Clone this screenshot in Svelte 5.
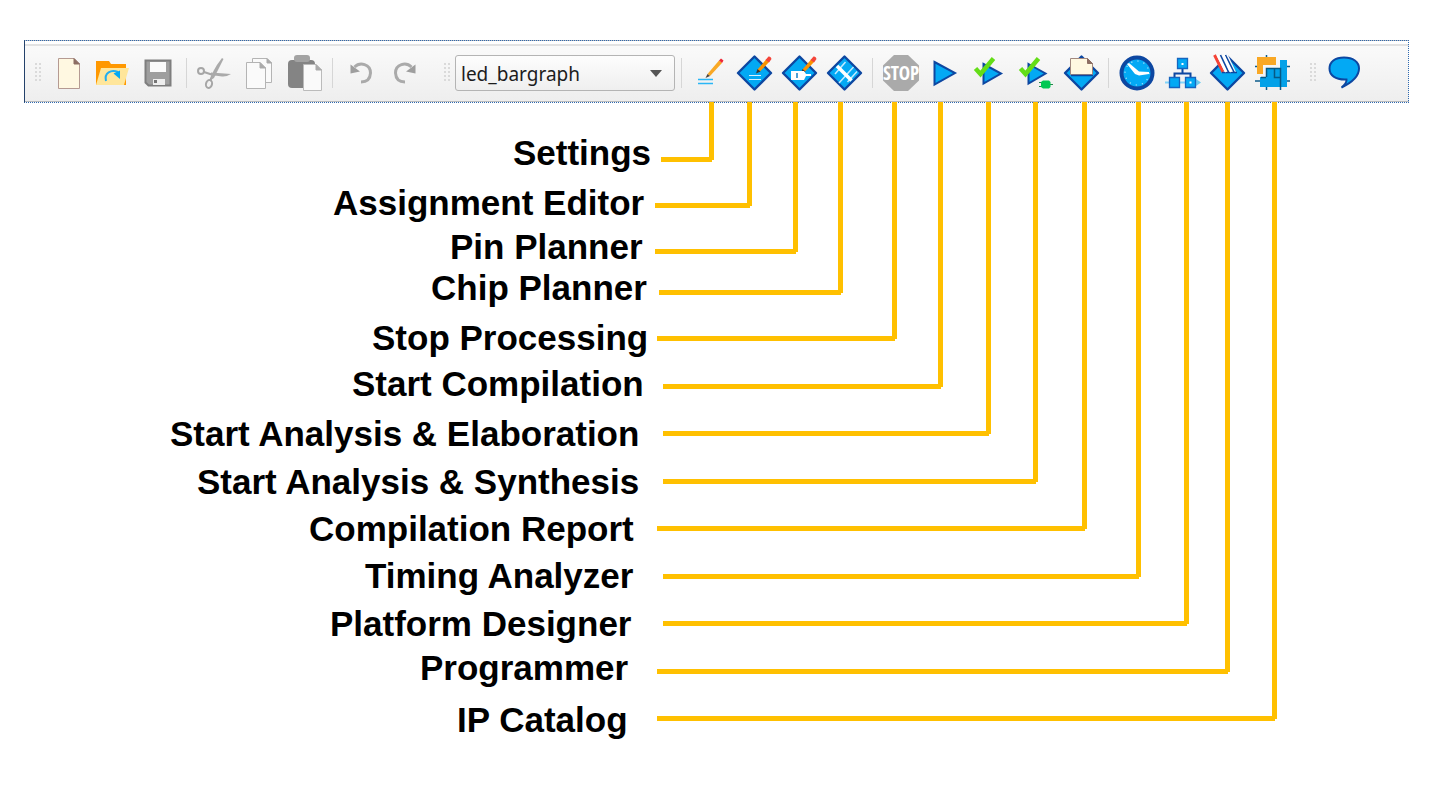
<script>
  const callouts = [
    { label: 'Settings', x: 513, y: 133, from: 661, line: 157, to: 709 },
    { label: 'Assignment Editor', x: 333, y: 183, from: 655, line: 203, to: 747 },
    { label: 'Pin Planner', x: 450, y: 227, from: 655, line: 249, to: 793 },
    { label: 'Chip Planner', x: 431, y: 268, from: 659, line: 290, to: 838 },
    { label: 'Stop Processing', x: 372, y: 318, from: 657, line: 336, to: 892 },
    { label: 'Start Compilation', x: 352, y: 364, from: 663, line: 384, to: 938 },
    { label: 'Start Analysis & Elaboration', x: 170, y: 414, from: 663, line: 431, to: 986 },
    { label: 'Start Analysis & Synthesis', x: 197, y: 462, from: 663, line: 479, to: 1033 },
    { label: 'Compilation Report', x: 309, y: 509, from: 657, line: 526, to: 1082 },
    { label: 'Timing Analyzer', x: 365, y: 556, from: 663, line: 574, to: 1136 },
    { label: 'Platform Designer', x: 330, y: 604, from: 663, line: 621, to: 1184 },
    { label: 'Programmer', x: 420, y: 648, from: 657, line: 669, to: 1225 },
    { label: 'IP Catalog', x: 457, y: 700, from: 657, line: 716, to: 1272 },
  ];
  const top = 102;
  const groups = [
    ['New', 'Open', 'Save'],
    ['Cut', 'Copy', 'Paste'],
    ['Undo', 'Redo'],
  ];
  const tools = [
    ['Settings', 'Assignment Editor', 'Pin Planner', 'Chip Planner'],
    ['Stop Processing', 'Start Compilation', 'Start Analysis & Elaboration', 'Start Analysis & Synthesis', 'Compilation Report'],
    ['Timing Analyzer', 'Platform Designer', 'Programmer', 'IP Catalog'],
  ];
</script>

{#snippet grip()}
  <span class="grip">
    <svg width="6" height="20" viewBox="0 0 6 20" aria-hidden="true">
      {#each [0, 4, 8, 12, 16] as y}
        <path d="M0 {y}h2v2h-2zM4 {y}h2v2h-2z" fill="#dadada" />
      {/each}
    </svg>
  </span>
{/snippet}

{#snippet diamond()}
  <path d="M22.500 9.500L39 26L22.500 42.500L6 26Z" fill="#03a9f4" stroke="#0d47a1" stroke-width="2.400" stroke-linejoin="round" />
{/snippet}

{#snippet pencil()}
  <path d="M25.500 22.500L34.500 12L37.500 14.500L28 24.500Z" fill="#fb9200" />
  <path d="M33.500 13L36.500 9.500Q39 9 39.500 12L37 15.500Z" fill="#f4453a" />
  <path d="M25.500 22L28.500 24.500L24 26.500Z" fill="#3e3430" />
{/snippet}

{#snippet check()}
  <path d="M7.500 21.500L12.500 27L25.500 11.500" fill="none" stroke="#64dd17" stroke-width="4.500" />
{/snippet}

{#snippet icon(name)}
  <svg class="icon" viewBox="0 0 45 52" aria-hidden="true">
    {#if name === 'New'}
      <path d="M12.500 11.500H28L33.500 17V41.500H12.500Z" fill="#fff8e1" stroke="#b59a92" />
      <path d="M28 11.500L33.500 17H28Z" fill="#8d6e63" stroke="#8d6e63" />
    {:else if name === 'Open'}
      <path d="M5 14H18L20 17H35V38H5Z" fill="#ff9800" />
      <path d="M10 21H38L33 38H5Z" fill="#ffe69b" />
      <path d="M15 34C13 26 20 22 27 25" fill="none" stroke="#22aef0" stroke-width="2" />
      <path d="M22.500 26.500L29 23.500V32Z" fill="#03a9f4" />
    {:else if name === 'Save'}
      <path d="M9.500 13.500H34.500V38.500H12.500L9.500 35.500Z" fill="#9e9e9e" stroke="#7e7e7e" stroke-width="2" />
      <path d="M14 15H30V25H14Z" fill="#fafafa" />
      <path d="M17 32H29V38H17Z" fill="#eee" />
      <path d="M18 33H21V36H18Z" fill="#757575" />
    {:else if name === 'Cut'}
      <g fill="none" stroke="#a6a6a6" stroke-width="2">
        <circle cx="9" cy="24" r="3" />
        <ellipse cx="17" cy="37" rx="3" ry="4" transform="rotate(15 17 37)" />
        <path d="M12 25L21 28M18 34L21 27" />
      </g>
      <path d="M19 25.500L39 27Q34 30 30 29.500L19 28ZM30 11L31.500 12L22 31L19 33Q19 25 30 11Z" fill="#aaa" />
    {:else if name === 'Copy'}
      <g transform="translate(-1 0)">
        <path d="M16.500 11.500H31L35.500 16V35.500H16.500Z" fill="#fafafa" stroke="#b4b4b4" />
        <path d="M31 11.500V16H35.500Z" fill="#aaa" stroke="#aaa" />
        <path d="M10.500 15.500H24L29.500 21V41.500H10.500Z" fill="#fafafa" stroke="#b4b4b4" />
        <path d="M24 15.500V21H29.500Z" fill="#aaa" stroke="#aaa" />
      </g>
    {:else if name === 'Paste'}
      <rect x="6" y="13" width="27" height="28" rx="4" fill="#848484" />
      <rect x="12" y="8" width="16" height="7" rx="3" fill="#a3a3a3" />
      <path d="M21.500 17.500H34L39.500 23V43.500H21.500Z" fill="#fafafa" stroke="#bbb" />
      <path d="M34 17.500V23H39.500Z" fill="#aaa" stroke="#aaa" />
    {:else if name === 'Undo'}
      <path d="M16.500 20C22 14.500 32.500 17 32.500 26Q32 35 23 35" fill="none" stroke="#aaa" stroke-width="3" />
      <path d="M12.500 17.500V26.500L22 24.500Z" fill="#9e9e9e" />
    {:else if name === 'Redo'}
      <path d="M28.500 20C23 14.500 12.500 17 12.500 26Q13 35 22 35" fill="none" stroke="#aaa" stroke-width="3" />
      <path d="M32.500 17.500V26.500L23 24.500Z" fill="#9e9e9e" />
    {:else if name === 'Settings'}
      <path d="M20.500 27L32 13.500L35 16L23 29Z" fill="#f9a825" />
      <path d="M32 13.500L34 11.500L36.500 13.500L35 16Z" fill="#ee2737" />
      <path d="M20.500 27L23 29L18.500 31Z" fill="#4e443c" />
      <path d="M11 32.500H26M11 36.500H26" stroke="#29b6f6" stroke-width="1.500" />
    {:else if name === 'Assignment Editor'}
      {@render diamond()}
      {@render pencil()}
      <path d="M17 28.500H29M17 32.500H29" stroke="#d9f2ff" />
    {:else if name === 'Pin Planner'}
      {@render diamond()}
      {@render pencil()}
      <path d="M14 24H27L29 27H34V29H29L27 33H14Z" fill="#fff" />
      <path d="M19 26H21V31H19Z" fill="#4d9fd4" />
    {:else if name === 'Chip Planner'}
      {@render diamond()}
      <path d="M23.500 15L13 27M31.500 20L17 36M35 24.500L25.500 35" stroke="#c3eaff" stroke-width="1.500" />
      <path d="M15 19L29.500 33.500" stroke="#fff" stroke-width="3.500" />
    {:else if name === 'Stop Processing'}
      <path d="M16 8H30L41 18.500V33.500L30 44H16L5 33.500V18.500Z" fill="#aaa" />
      <text x="23" y="33" text-anchor="middle" class="stop">STOP</text>
    {:else if name === 'Start Compilation'}
      <path d="M11.500 15L32 26L11.500 37.500Z" fill="#03a9f4" stroke="#0d47a1" stroke-width="2" />
    {:else if name === 'Start Analysis & Elaboration'}
      <path d="M15.500 17L33 26.500L15.500 36.500Z" fill="#03a9f4" stroke="#0d47a1" stroke-width="2" />
      {@render check()}
    {:else if name === 'Start Analysis & Synthesis'}
      <path d="M15.500 17L32.500 26.500L15.500 36.500Z" fill="#03a9f4" stroke="#0d47a1" stroke-width="2" />
      {@render check()}
      <path d="M26 35.500H29M26 39.500H29M36 37.500H40" stroke="#22894b" />
      <path d="M30 33.500H36L37.500 35V40L36 41.500H30L28 40V35Z" fill="#00c853" />
    {:else if name === 'Compilation Report'}
      <g transform="translate(1 0)">
        {@render diamond()}
        <path d="M11.500 11.500H28.500L33.500 16.500V27.500H11.500Z" fill="#fff8e1" stroke="#a1887f" />
        <path d="M28.500 11.500V16.500H33.500Z" fill="#8d6e63" stroke="#8d6e63" />
        <path d="M12 28.500H34" stroke="#0d47a1" stroke-width="1.500" />
      </g>
    {:else if name === 'Timing Analyzer'}
      <circle cx="23" cy="26" r="15.500" fill="#03a9f4" stroke="#0d47a1" stroke-width="4" />
      <circle cx="23" cy="26" r="12" fill="none" stroke="#b3e5fc" stroke-dasharray="1.200 5.083" stroke-width="1.200" />
      <path d="M13 17L15 16L25 24.500L35 25V27L25 28.500L21 27Z" fill="#fff" />
    {:else if name === 'Platform Designer'}
      <g transform="translate(1 0)">
        <path d="M5 35.500H37" stroke="#81d4fa" stroke-width="2" />
        <path d="M36 32L41 35.500L36 39Z" fill="#6ccbf0" />
        <path d="M22.500 21V26M14.500 32V26.500H30.500V32" fill="none" stroke="#0d47a1" stroke-width="2" />
        <g fill="#03a9f4" stroke="#1565c0" stroke-width="1.300">
          <path d="M17.500 11.500H27.500V21.500H17.500ZM9.500 30.500H19.500V40.500H9.500ZM25.500 30.500H35.500V40.500H25.500Z" />
        </g>
        <path d="M21.500 16H23.500V18H21.500ZM29.500 34.500H31.500V36.500H29.500Z" fill="#fff" />
      </g>
    {:else if name === 'Programmer'}
      <g transform="translate(1 0)">
        {@render diamond()}
        <path d="M7 8H23L31 25H18Z" fill="#fafafa" />
        <path d="M9.500 8L18 25" stroke="#f44336" stroke-width="3" />
        <path d="M15.500 8L23.500 25M20.500 8L29 25M17 25.500H32" stroke="#0d47a1" stroke-width="1.600" />
        <path d="M12.500 8L21 25M18.500 8L26 25" stroke="#fff" stroke-width="2" />
      </g>
    {:else if name === 'IP Catalog'}
      <path d="M17.500 8V12M6 19.500H10M36 19.500H41M6 34H12M36 34H41M17.500 38V43M31.500 38V43" stroke="#0d5c8c" stroke-width="1.500" />
      <path d="M8 10H27V18H14V27H8Z" fill="#f9a825" />
      <path d="M31 13H38V40H11V30H17V21H31Z" fill="#03a1e8" />
      <path d="M17.500 30V21.500H31.500V40M25.500 22V30.500H31M12 30.500H17" fill="none" stroke="#075985" stroke-width="1.500" />
    {:else if name === 'Comment'}
      <path d="M23 10.500C32 10.500 38 15 38 21.500C38 28 34 34 20.500 40.500Q26 36 25.500 32.500C14 33 8.500 28 8.500 21.500C8.500 15 14 10.500 23 10.500Z" fill="#03a9f4" stroke="#0d47a1" stroke-width="2" />
    {/if}
  </svg>
{/snippet}

{#snippet toolButton(name)}
  <button type="button" aria-label={name}>{@render icon(name)}</button>
{/snippet}

<main>
  <div class="toolbar" role="toolbar" aria-label="Main toolbar">
    {@render grip()}
    {#each groups as group, i}
      {#if i > 0}<span class="separator"></span>{/if}
      {#each group as name}{@render toolButton(name)}{/each}
    {/each}
    {@render grip()}
    <span class="picker">
      <select aria-label="Revision">
        <option>led_bargraph</option>
      </select>
      <svg width="12" height="7" viewBox="0 0 12 7" aria-hidden="true"><path d="M0 0H12L6 7Z" fill="#555" /></svg>
    </span>
    {#each tools as group}
      <span class="separator"></span>
      {#each group as name}{@render toolButton(name)}{/each}
    {/each}
    {@render grip()}
    {@render toolButton('Comment')}
  </div>

  <svg class="connectors" aria-hidden="true">
    {#each callouts as c}
      <rect x={c.to} y={top} width="5" height={c.line + 3 - top} />
      <rect x={c.from} y={c.line} width={c.to + 3 - c.from} height="5" />
    {/each}
  </svg>
  <ul>
    {#each callouts as c}
      <li style="left: {c.x}px; top: {c.y}px">{c.label}</li>
    {/each}
  </ul>
</main>

<style>
  :global(body) {
    margin: 0;
    background: #fff;
  }
  main {
    position: relative;
    box-sizing: border-box;
    min-height: 100vh;
    padding: 40px 22px 0 24px;
    font-family: "Liberation Sans", Arial, sans-serif;
  }
  .toolbar {
    display: flex;
    align-items: center;
    box-sizing: border-box;
    height: 63px;
    padding-top: 2px;
    border: 1px dotted #2f69b0;
    border-left: 1px solid #24426b;
    background: linear-gradient(#fff 0 3px, #e2e2e2 3px 5px, #fafafa 5px, #eee 60px, #bbb 60px);
  }
  .grip {
    display: flex;
    flex: none;
    align-items: center;
    justify-content: flex-end;
    box-sizing: border-box;
    width: 27px;
    padding-right: 5px;
  }
  .grip:first-child {
    width: 21px;
  }
  button {
    flex: none;
    width: 45px;
    height: 52px;
    padding: 0;
    border: 0;
    background: none;
  }
  .icon {
    display: block;
    width: 45px;
    height: 52px;
  }
  .stop {
    font: 400 19px "Open Sans Condensed", "Liberation Sans Narrow", sans-serif;
    fill: #fff;
  }
  .separator {
    flex: none;
    width: 1px;
    height: 30px;
    margin: 0 5px;
    background: #d6d6d6;
  }
  .picker {
    position: relative;
    flex: none;
    width: 220px;
    margin-right: 1px;
  }
  select {
    display: block;
    box-sizing: border-box;
    width: 100%;
    height: 36px;
    padding: 3px 5px 0;
    border: 1px solid #b4b4b4;
    border-radius: 3px;
    appearance: none;
    background: linear-gradient(#fdfdfd, #efefef);
    color: #1c1c1c;
    font: 19px "Noto Sans", "Open Sans", sans-serif;
  }
  .picker svg {
    position: absolute;
    top: 15px;
    right: 13px;
    pointer-events: none;
  }
  .connectors {
    position: absolute;
    inset: 0;
    width: 100%;
    height: 100%;
    fill: #ffc000;
    pointer-events: none;
  }
  ul {
    margin: 0;
    padding: 0;
    list-style: none;
  }
  li {
    position: absolute;
    color: #000;
    font-size: 35px;
    font-weight: 700;
    line-height: 40px;
    white-space: nowrap;
  }
</style>
